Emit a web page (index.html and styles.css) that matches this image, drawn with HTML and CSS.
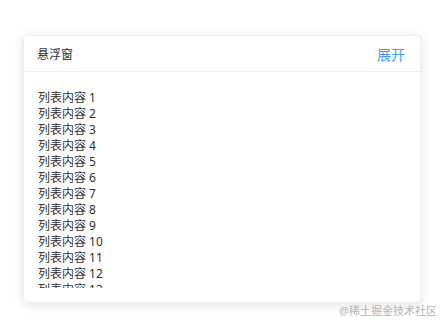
FILE: index.html
```html
<!DOCTYPE html>
<html lang="zh-CN">
<head>
  <meta charset="UTF-8">
  <title>悬浮窗</title>
  <link rel="stylesheet" href="styles.css">
</head>
<body>

  <div class="float-card">
    <div class="card-header">
      <span class="card-title">悬浮窗</span>
      <a class="toggle">展开</a>
    </div>
    <div class="card-body">
      <ul class="list" id="list"></ul>
    </div>
  </div>

  <div class="watermark">@稀土掘金技术社区</div>

  <script>
    const list = document.getElementById('list');

    // Fill the list
    for (let i = 1; i <= 13; i++) {
      const li = document.createElement('li');
      li.textContent = '列表内容 ' + i;
      list.appendChild(li);
    }
  </script>

</body>
</html>
```

FILE: styles.css
```css
body {
  margin: 0;
  padding: 35px 0 0 23px;
  background: #fff;
  font-family: "Segoe UI", "Noto Sans", "Noto Sans CJK SC", sans-serif;
  color: #303133;
}
.float-card {
  width: 396px;
  height: 266px;
  background: #fff;
  border: 1px solid #ebeef5;
  border-radius: 4px;
  box-shadow: 0 2px 12px rgba(0,0,0,0.12);
  overflow: hidden;
}
.card-header {
  display: flex;
  justify-content: space-between;
  align-items: center;
  height: 35px;
  padding: 0 15px 0 13px;
  border-bottom: 1px solid #ebeef5;
}
.card-title {
  font-size: 12px;
  color: #303133;
}
.toggle {
  font-size: 14px;
  color: #409eff;
  cursor: pointer;
}
.card-body {
  padding: 18px 14px 0;
}
.list {
  margin: 0;
  padding: 0;
  list-style: none;
  height: 198px;
  overflow: hidden;
}
.list li {
  font-size: 12px;
  line-height: 16px;
  color: #303133;
}
.watermark {
  width: 414px;
  margin-top: -1px;
  text-align: right;
  font-size: 11px;
  color: #b5b5b5;
}
```
